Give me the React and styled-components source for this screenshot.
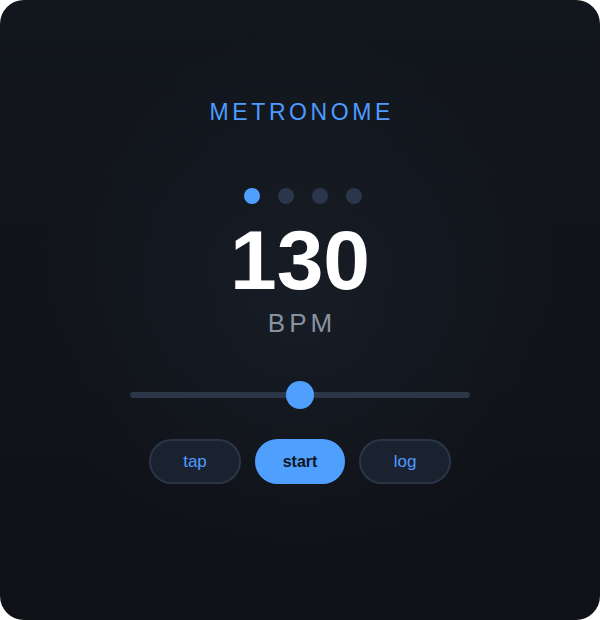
import React, { useState } from 'react'
import styled, { createGlobalStyle } from 'styled-components'

const GlobalStyle = createGlobalStyle`
  html, body {
    margin: 0;
    padding: 0;
    background: #ffffff;
  }
  * { box-sizing: border-box; }
`

const Card = styled.div`
  width: 600px;
  height: 620px;
  border-radius: 24px;
  overflow: hidden;
  background:
    radial-gradient(circle at 50% 48%, rgba(28, 36, 48, 0.55) 0%, rgba(28, 36, 48, 0) 60%),
    linear-gradient(180deg, #12161d 0%, #0f1116 100%);
  display: flex;
  flex-direction: column;
  align-items: center;
  padding-top: 98px;
  font-family: "Liberation Sans", Arial, sans-serif;
`

const Title = styled.h1`
  margin: 0;
  font-size: 23px;
  line-height: 28px;
  font-weight: 400;
  letter-spacing: 3.6px;
  margin-right: -3.6px;
  color: #4d9bff;
`

const Dots = styled.div`
  display: flex;
  gap: 18px;
  margin-top: 62px;
  margin-left: 6px;
`

const Dot = styled.span`
  width: 16px;
  height: 16px;
  border-radius: 50%;
  background: ${p => (p.$on ? '#4f9fff' : '#2a3649')};
`

const Bpm = styled.div`
  margin-top: 14px;
  font-size: 84px;
  line-height: 84px;
  font-weight: 700;
  color: #ffffff;
`

const Unit = styled.div`
  margin-top: 8px;
  font-size: 26px;
  line-height: 26px;
  letter-spacing: 4px;
  margin-right: -4px;
  color: #8892a1;
`

const Slider = styled.input`
  -webkit-appearance: none;
  appearance: none;
  margin: 45px 0 0;
  width: 340px;
  height: 28px;
  background: transparent;
  outline: none;

  &::-webkit-slider-runnable-track {
    height: 6px;
    border-radius: 3px;
    background: #2b3748;
  }
  &::-webkit-slider-thumb {
    -webkit-appearance: none;
    width: 28px;
    height: 28px;
    margin-top: -11px;
    border-radius: 50%;
    background: #4f9fff;
    border: none;
  }
`

const Buttons = styled.div`
  display: flex;
  gap: 14px;
  margin-top: 30px;
`

const Button = styled.button`
  width: ${p => (p.$primary ? '90px' : '92px')};
  height: 45px;
  border-radius: 23px;
  font-family: "Liberation Sans", Arial, sans-serif;
  font-size: ${p => (p.$primary ? '16px' : '17px')};
  font-weight: ${p => (p.$primary ? 700 : 400)};
  color: ${p => (p.$primary ? '#0f1622' : '#4d9bff')};
  background: ${p => (p.$primary ? '#4f9fff' : '#1a2230')};
  border: 2px solid ${p => (p.$primary ? '#4f9fff' : '#2a3547')};
  cursor: pointer;
`

const App = () => {
  const [bpm, setBpm] = useState(130)
  return (
    <>
      <GlobalStyle />
      <Card>
        <Title>METRONOME</Title>
        <Dots>
          <Dot $on />
          <Dot />
          <Dot />
          <Dot />
        </Dots>
        <Bpm>{bpm}</Bpm>
        <Unit>BPM</Unit>
        <Slider
          type="range"
          min={40}
          max={220}
          value={bpm}
          onChange={e => setBpm(Number(e.target.value))}
        />
        <Buttons>
          <Button>tap</Button>
          <Button $primary>start</Button>
          <Button>log</Button>
        </Buttons>
      </Card>
    </>
  )
}

export default App
